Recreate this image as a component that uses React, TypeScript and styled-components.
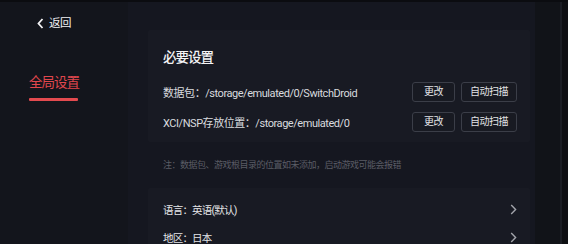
import React from "react";
import styled, { createGlobalStyle } from "styled-components";

const GlobalStyle = createGlobalStyle`
    html, body {
        margin: 0;
        padding: 0;
        background: #14161e;
    }
    body {
        font-family: Roboto, "Noto Sans CJK SC", sans-serif;
        color: #e6e7ea;
    }
`;

const Screen = styled.div`
    display: flex;
    width: 568px;
    height: 244px;
    overflow: hidden;
    border-top: 2px solid #0b0c10;
    box-sizing: border-box;
    background: #14161e;
`;

const Sidebar = styled.div`
    width: 128px;
    flex-shrink: 0;
    display: flex;
    flex-direction: column;
    padding: 12px 0 0 29px;
    box-sizing: border-box;
    background: #13151c;
`;

const BackLink = styled.div`
    display: flex;
    align-items: center;
    gap: 5px;
    margin-left: 8px;
    font-size: 11.5px;
    letter-spacing: -0.5px;
    line-height: 18px;
    color: #f2f2f4;
    cursor: pointer;
`;

const NavItem = styled.div<{ $active?: boolean }>`
    margin-top: 41px;
    width: 49px;
    font-size: 13.5px;
    letter-spacing: -1px;
    line-height: 18px;
    white-space: nowrap;
    color: ${(p) => (p.$active ? "#e0474d" : "#9a9ca4")};
    &::after {
        content: "";
        display: ${(p) => (p.$active ? "block" : "none")};
        height: 3px;
        margin-top: 7px;
        border-radius: 1px;
        background: #e34a4f;
    }
`;

const Main = styled.div`
    width: 407px;
    flex-shrink: 0;
    display: flex;
    flex-direction: column;
    padding: 28px 5px 0 20px;
    box-sizing: border-box;
    background: #151720;
`;

const Card = styled.div<{ $bottom?: number }>`
    display: flex;
    flex-direction: column;
    background: #181a23;
    border-radius: 2px;
    padding: 0 13px ${(p) => p.$bottom ?? 0}px 15px;
`;

const CardTitle = styled.div`
    font-size: 13.5px;
    font-weight: 500;
    letter-spacing: -1px;
    line-height: 20px;
    color: #f3f3f5;
    margin: 17px 0 10px;
`;

const PathRow = styled.div`
    display: flex;
    align-items: center;
    height: 30px;
    font-size: 11px;
    letter-spacing: -0.45px;
    color: #d9dadf;
`;

const PathText = styled.span`
    flex: 1;
    white-space: nowrap;
`;

const Button = styled.button<{ $w: number }>`
    width: ${(p) => p.$w}px;
    height: 20px;
    margin-left: 6px;
    padding: 0;
    border: 1px solid #3b3e48;
    border-radius: 3px;
    background: #181a22;
    color: #e2e3e6;
    font-family: Roboto, "Noto Sans CJK SC", sans-serif;
    font-size: 10px;
    letter-spacing: -0.5px;
    line-height: 18px;
    cursor: pointer;
`;

const Note = styled.div`
    margin: 16px 0 16px 15px;
    font-size: 9px;
    letter-spacing: -0.5px;
    line-height: 14px;
    color: #5b5d66;
    white-space: nowrap;
`;

const OptionRow = styled.div<{ $first?: boolean }>`
    display: flex;
    align-items: center;
    height: 28px;
    margin-top: ${(p) => (p.$first ? "7px" : "0")};
    font-size: 10.5px;
    letter-spacing: -0.8px;
    color: #e4e5e8;
`;

const OptionLabel = styled.span`
    flex: 1;
`;

const RightRail = styled.div`
    flex: 1;
    background: #111318;
    border-right: 6px solid #0e0f13;
    box-shadow: inset -2px 0 0 #1b1d24;
`;

const BackIcon = () => (
    <svg width="7" height="11" viewBox="0 0 7 11">
        <path d="M5.5 1 L1.5 5.5 L5.5 10" fill="none" stroke="#f2f2f4" strokeWidth="1.8" />
    </svg>
);

const Chevron = () => (
    <svg width="7" height="11" viewBox="0 0 7 11">
        <path d="M1.2 1 L5.6 5.5 L1.2 10" fill="none" stroke="#a2a4ab" strokeWidth="1.4" />
    </svg>
);

const paths = [
    { label: "数据包：/storage/emulated/0/SwitchDroid" },
    { label: "XCI/NSP存放位置：/storage/emulated/0" },
];

const options = ["语言：英语(默认)", "地区：日本"];

const App = () => {
    return (
        <>
            <GlobalStyle />
            <Screen>
                <Sidebar>
                    <BackLink>
                        <BackIcon />
                        返回
                    </BackLink>
                    <NavItem $active>全局设置</NavItem>
                </Sidebar>
                <Main>
                    <Card $bottom={5}>
                        <CardTitle>必要设置</CardTitle>
                        {paths.map((p) => (
                            <PathRow key={p.label}>
                                <PathText>{p.label}</PathText>
                                <Button $w={43}>更改</Button>
                                <Button $w={56}>自动扫描</Button>
                            </PathRow>
                        ))}
                    </Card>
                    <Note>注：数据包、游戏根目录的位置如未添加，启动游戏可能会报错</Note>
                    <Card>
                        {options.map((o, i) => (
                            <OptionRow key={o} $first={i === 0}>
                                <OptionLabel>{o}</OptionLabel>
                                <Chevron />
                            </OptionRow>
                        ))}
                    </Card>
                </Main>
                <RightRail />
            </Screen>
        </>
    );
};

export default App;
